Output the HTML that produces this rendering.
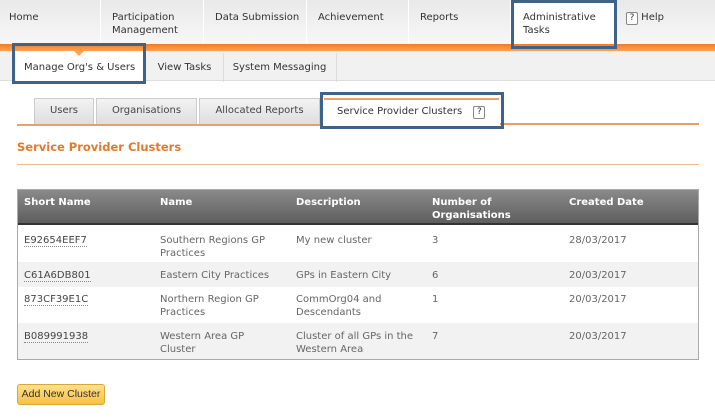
<!DOCTYPE html>
<html><head><style>
body{margin:0;width:715px;height:419px;position:relative;background:#fff;font-family:"DejaVu Sans",Verdana,sans-serif;font-size:10px;color:#444;overflow:hidden}
.a{position:absolute}
.nav{left:0;top:0;width:715px;height:44px;background:linear-gradient(#e9e9e9,#f7f7f7)}
.ni{position:absolute;top:11px;line-height:13px;color:#333}
.sep{position:absolute;top:0;width:1px;height:44px;background:#fff}
.tab{position:absolute;top:98px;height:26px;background:linear-gradient(#f3f3f3,#ddd);border:1px solid #ccc;border-bottom:none;text-align:center;line-height:24px;color:#444}
.box{position:absolute;border:3px solid #3d6389;box-sizing:border-box}
.th{position:absolute;color:#fff;font-weight:bold;line-height:13px}
.td{position:absolute;color:#666;line-height:13px}
.lk{color:#444;border-bottom:1px dotted #888}
</style></head><body>
<div class="a nav"></div>
<div class="sep" style="left:100px"></div><div class="sep" style="left:203px"></div><div class="sep" style="left:306px"></div><div class="sep" style="left:408px"></div><div class="sep" style="left:510px"></div>
<div class="ni" style="left:9px">Home</div>
<div class="ni" style="left:112px">Participation<br>Management</div>
<div class="ni" style="left:215px">Data Submission</div>
<div class="ni" style="left:318px">Achievement</div>
<div class="ni" style="left:420px">Reports</div>
<div class="a" style="left:512px;top:0;width:103px;height:46px;background:#fff;border-top:3px solid #f47b20;box-sizing:border-box"></div>
<div class="ni" style="left:523px">Administrative<br>Tasks</div>
<div class="ni" style="left:626px"><span style="display:inline-block;width:10px;height:11px;border:1px solid #888;border-radius:2px;text-align:center;line-height:11px;font-size:9px;background:#fff">?</span> Help</div>
<div class="a" style="left:0;top:44px;width:715px;height:7px;background:linear-gradient(#f47b20,#f9a35a)"></div>
<div class="a" style="left:0;top:51px;width:715px;height:29px;background:#f1f1f1;border-bottom:1px solid #ddd"></div>
<div class="a" style="left:16px;top:51px;width:127px;height:30px;background:#fff"></div>
<div class="a" style="left:24px;top:62px;color:#333">Manage Org's &amp; Users</div>
<div class="a" style="left:145px;top:53px;width:77px;height:29px;border-left:1px solid #fff;border-right:1px solid #ddd;line-height:29px;text-align:center;color:#333">View Tasks</div>
<div class="a" style="left:223px;top:53px;width:113px;height:29px;border-right:1px solid #ddd;line-height:29px;text-align:center;color:#333">System Messaging</div>
<div class="a" style="left:74px;top:51px;width:0;height:0;border-left:5px solid transparent;border-right:5px solid transparent;border-top:5px solid #f9a35a"></div>
<div class="tab" style="left:34px;width:58px">Users</div>
<div class="tab" style="left:96px;width:99px">Organisations</div>
<div class="tab" style="left:199px;width:119px">Allocated Reports</div>
<div class="a" style="left:324px;top:98px;width:175px;height:27px;background:#fff;border-top:2px solid #f0a060;line-height:24px;color:#333;padding-left:13px;box-sizing:border-box">Service Provider Clusters <span style="display:inline-block;width:10px;height:11px;border:1px solid #888;border-radius:2px;text-align:center;line-height:11px;font-size:9px;margin-left:8px">?</span></div>
<div class="a" style="left:17px;top:124px;width:305px;height:2px;background:#e8a06a"></div>
<div class="a" style="left:500px;top:123px;width:199px;height:2px;background:#e8a06a"></div>
<div class="a" style="left:17px;top:140px;color:#e07a2e;font-weight:bold;font-size:11.5px">Service Provider Clusters</div>
<div class="a" style="left:17px;top:164px;width:682px;height:1px;background:#e6c08c"></div>
<div class="a" style="left:17px;top:189px;width:682px;height:171px;border:1px solid #aaa;box-sizing:border-box"></div>
<div class="a" style="left:18px;top:190px;width:680px;height:35px;background:linear-gradient(#8a8a8a,#5e5e5e);border-bottom:2px solid #333;box-sizing:border-box"></div>
<div class="a" style="left:18px;top:262px;width:680px;height:25px;background:#f2f2f2"></div>
<div class="a" style="left:18px;top:323px;width:680px;height:36px;background:#f2f2f2"></div>
<div class="th" style="left:24px;top:196px">Short Name</div>
<div class="th" style="left:160px;top:196px">Name</div>
<div class="th" style="left:296px;top:196px">Description</div>
<div class="th" style="left:432px;top:196px">Number of<br>Organisations</div>
<div class="th" style="left:569px;top:196px">Created Date</div>
<div class="td" style="left:24px;top:234px"><span class="lk">E92654EEF7</span></div>
<div class="td" style="left:160px;top:234px">Southern Regions GP<br>Practices</div>
<div class="td" style="left:296px;top:234px">My new cluster</div>
<div class="td" style="left:432px;top:234px">3</div>
<div class="td" style="left:569px;top:234px">28/03/2017</div>
<div class="td" style="left:24px;top:269px"><span class="lk">C61A6DB801</span></div>
<div class="td" style="left:160px;top:269px">Eastern City Practices</div>
<div class="td" style="left:296px;top:269px">GPs in Eastern City</div>
<div class="td" style="left:432px;top:269px">6</div>
<div class="td" style="left:569px;top:269px">20/03/2017</div>
<div class="td" style="left:24px;top:293px"><span class="lk">873CF39E1C</span></div>
<div class="td" style="left:160px;top:293px">Northern Region GP<br>Practices</div>
<div class="td" style="left:296px;top:293px">CommOrg04 and<br>Descendants</div>
<div class="td" style="left:432px;top:293px">1</div>
<div class="td" style="left:569px;top:293px">20/03/2017</div>
<div class="td" style="left:24px;top:330px"><span class="lk">B089991938</span></div>
<div class="td" style="left:160px;top:330px">Western Area GP<br>Cluster</div>
<div class="td" style="left:296px;top:330px">Cluster of all GPs in the<br>Western Area</div>
<div class="td" style="left:432px;top:330px">7</div>
<div class="td" style="left:569px;top:330px">20/03/2017</div>
<div class="a" style="left:17px;top:384px;width:88px;height:21px;background:linear-gradient(#ffe08a,#f5c242);border:1px solid #d9a83a;border-radius:3px;box-sizing:border-box;text-align:center;line-height:19px;font-family:'Liberation Sans',Arial,sans-serif;font-size:10.5px;color:#333">Add New Cluster</div>
<div class="box" style="left:511px;top:0;width:106px;height:49px"></div>
<div class="box" style="left:12px;top:43px;width:134px;height:41px"></div>
<div class="box" style="left:320px;top:92px;width:184px;height:37px"></div>
</body></html>
